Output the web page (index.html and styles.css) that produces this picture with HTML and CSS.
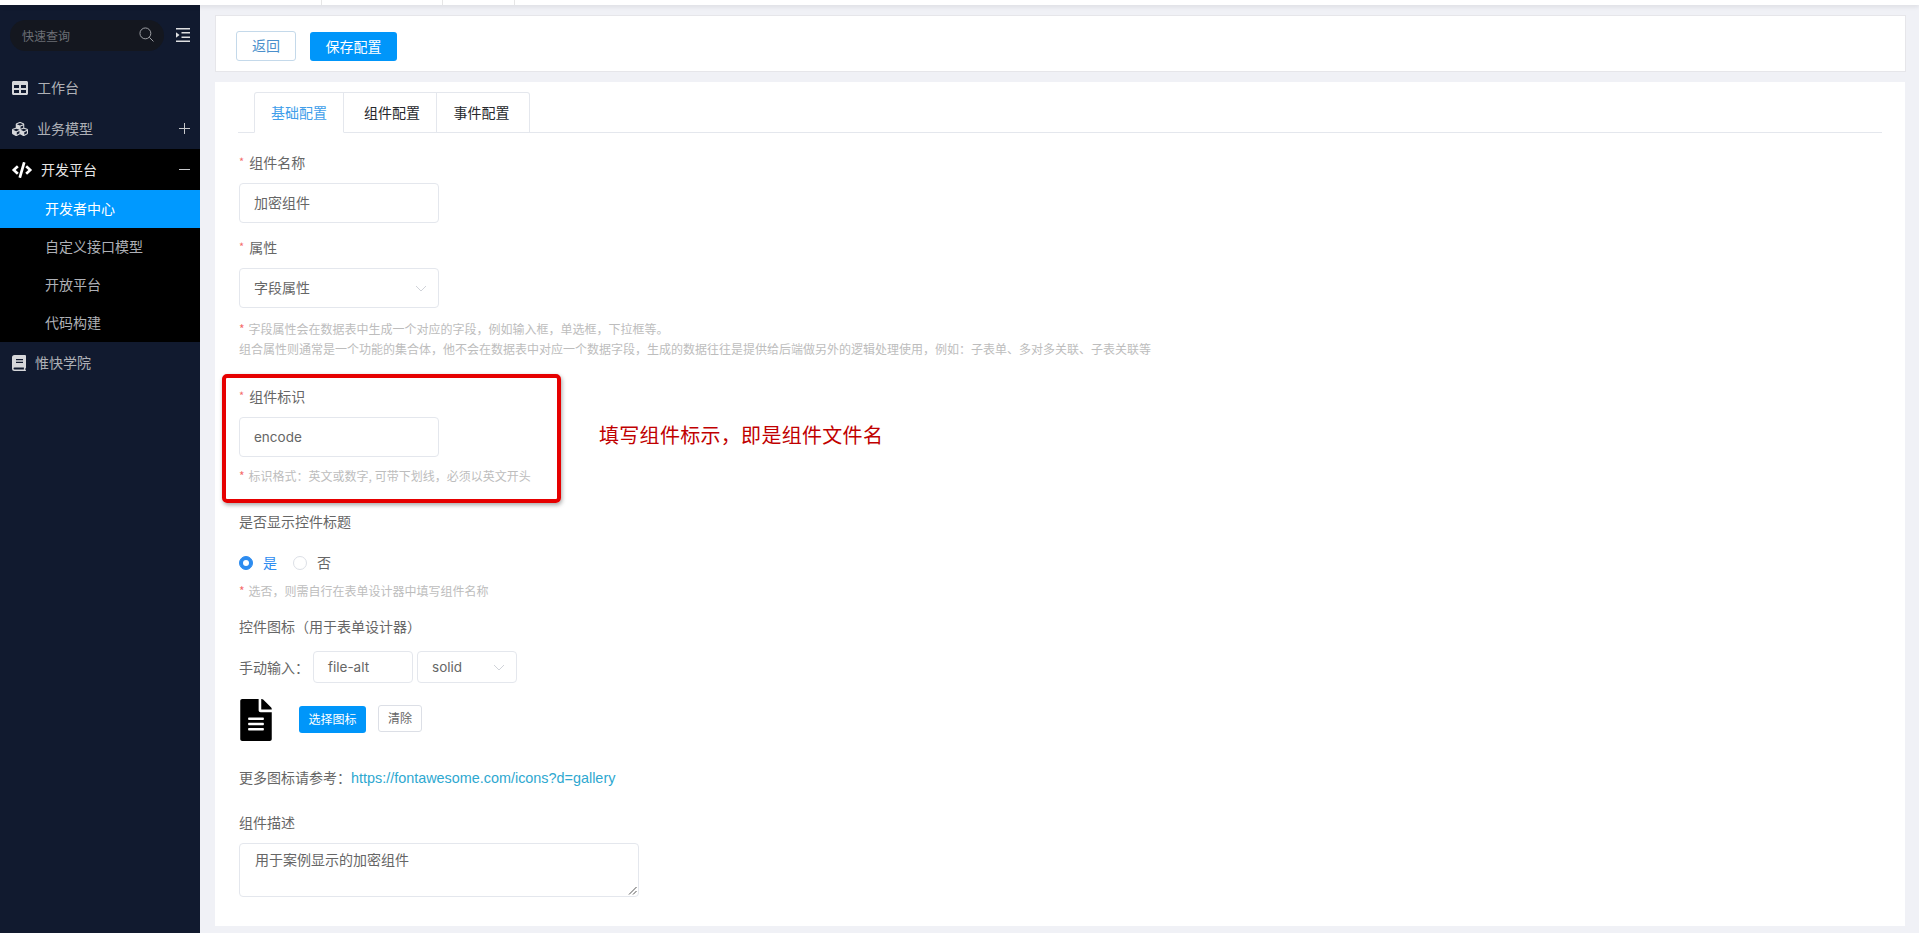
FILE: index.html
```html
<!DOCTYPE html>
<html lang="zh-CN">
<head>
<meta charset="utf-8">
<title>组件配置</title>
<link rel="stylesheet" href="styles.css">
</head>
<body>
<div class="topstrip"><span class="tab-stub s1"></span><span class="tab-stub s2"></span><span class="tab-stub s3"></span></div>
<div class="app">
  <aside class="sidebar">
    <div class="search-row">
      <div class="search"><span>快速查询</span>
        <svg class="search-icon" viewBox="0 0 16 16"><circle cx="6.800" cy="6.800" r="5.800"/><path d="M11 11l4.400 4.400"/></svg>
      </div>
      <svg class="indent" viewBox="0 0 14 14"><path d="M0 0h14v1.600H0zM5.500 4H14v1.600H5.500zM5.500 8.400H14V10H5.500zM0 12.400h14V14H0z"/><path d="M0 4.200L3.500 7 0 9.800z"/></svg>
    </div>
    <nav class="menu">
      <a class="item">
        <svg class="ico" viewBox="0 0 512 512"><path d="M464 32H48C21.490 32 0 53.490 0 80v352c0 26.510 21.490 48 48 48h416c26.510 0 48-21.490 48-48V80c0-26.510-21.490-48-48-48zM224 416H64v-96h160v96zm0-160H64v-96h160v96zm224 160H288v-96h160v96zm0-160H288v-96h160v96z"/></svg>
        <span>工作台</span>
      </a>
      <a class="item">
        <svg class="ico" viewBox="0 0 512 512"><path d="M488.600 250.200L392 214V105.500c0-15-9.300-28.400-23.400-33.700l-100-37.500c-8.100-3.100-17.100-3.100-25.300 0l-100 37.500c-14.100 5.300-23.400 18.700-23.400 33.700V214l-96.600 36.200C9.300 255.500 0 268.900 0 283.900V394c0 13.600 7.700 26.100 19.900 32.200l100 50c10.100 5.100 22.100 5.100 32.200 0l103.900-52 103.900 52c10.100 5.100 22.100 5.100 32.200 0l100-50c12.200-6.100 19.900-18.600 19.900-32.200V283.900c0-15-9.300-28.400-23.400-33.700zM358 214.800l-85 31.900v-68.200l85-37v73.300zM154 104.100l102-38.200 102 38.200v.6l-102 41.400-102-41.400v-.6zm84 291.100l-85 42.500v-79.100l85-38.800v75.400zm0-112l-102 41.400-102-41.400v-.6l102-38.200 102 38.200v.6zm240 112l-85 42.500v-79.100l85-38.800v75.400zm0-112l-102 41.400-102-41.400v-.6l102-38.200 102 38.200v.6z"/></svg>
        <span>业务模型</span><i class="sign plus"></i>
      </a>
      <div class="group">
        <a class="item open">
          <svg class="ico code" viewBox="0 0 640 512"><path d="M278.900 511.500l-61-17.700c-6.400-1.800-10-8.500-8.200-14.900L346.200 8.700c1.800-6.400 8.500-10 14.900-8.200l61 17.700c6.400 1.800 10 8.500 8.200 14.900L293.800 503.300c-1.900 6.400-8.500 10.100-14.900 8.200zm-114-112.200l43.500-46.400c4.600-4.900 4.300-12.700-.8-17.200L117 256l90.600-79.700c5.100-4.500 5.500-12.300.8-17.200l-43.500-46.400c-4.500-4.800-12.100-5.100-17-.5L3.800 247.200c-5.100 4.700-5.100 12.800 0 17.500l144.100 135.100c4.900 4.600 12.500 4.400 17-.5zm327.200.6l144.100-135.100c5.100-4.700 5.100-12.800 0-17.500L492.100 112.100c-4.800-4.500-12.400-4.300-17 .5L431.600 159c-4.600 4.900-4.300 12.700.8 17.200L523 256l-90.600 79.700c-5.100 4.500-5.500 12.300-.8 17.200l43.500 46.400c4.500 4.900 12.100 5.100 17 .6z"/></svg>
          <span>开发平台</span><i class="sign minus"></i>
        </a>
        <a class="sub active">开发者中心</a>
        <a class="sub">自定义接口模型</a>
        <a class="sub">开放平台</a>
        <a class="sub">代码构建</a>
      </div>
      <a class="item last">
        <svg class="ico book" viewBox="0 0 14 16"><path d="M2.500 0H13a1 1 0 0 1 1 1v11.500a1 1 0 0 1-.6.900V15h.1a.5.500 0 0 1 0 1H2.500A2.500 2.500 0 0 1 0 13.500v-11A2.500 2.500 0 0 1 2.500 0zM4 4v1.200h7V4zm0 2.800V8h7V6.800zM2.500 12.500a1 1 0 0 0 0 2h9.400v-2z"/></svg>
        <span>惟快学院</span>
      </a>
    </nav>
  </aside>
  <main class="main">
    <section class="toolbar">
      <button class="btn btn-plain">返回</button>
      <button class="btn btn-primary">保存配置</button>
    </section>
    <section class="panel">
      <div class="tabs">
        <span class="tab current">基础配置</span>
        <span class="tab second">组件配置</span>
        <span class="tab third">事件配置</span>
      </div>

      <label class="label"><em>*</em>组件名称</label>
      <div class="input">加密组件</div>

      <label class="label gap"><em>*</em>属性</label>
      <div class="input select">字段属性<svg class="chev" viewBox="0 0 12 7"><path d="M1 1l5 5 5-5"/></svg></div>

      <p class="help first"><em>*</em>字段属性会在数据表中生成一个对应的字段，例如输入框，单选框，下拉框等。<br>组合属性则通常是一个功能的集合体，他不会在数据表中对应一个数据字段，生成的数据往往是提供给后端做另外的逻辑处理使用，例如：子表单、多对多关联、子表关联等</p>

      <label class="label after-help"><em>*</em>组件标识</label>
      <div class="input latin">encode</div>
      <p class="help tight"><em>*</em>标识格式：英文或数字, 可带下划线，必须以英文开头</p>

      <label class="label after-id">是否显示控件标题</label>
      <div class="radios">
        <span class="radio on"></span><span class="radio-text on">是</span>
        <span class="radio"></span><span class="radio-text">否</span>
      </div>
      <p class="help radio-help"><em>*</em>选否，则需自行在表单设计器中填写组件名称</p>

      <label class="label icon-label">控件图标（用于表单设计器）</label>
      <div class="manual">
        <span class="manual-label">手动输入：</span>
        <div class="input small latin">file-alt</div>
        <div class="input small select latin">solid<svg class="chev" viewBox="0 0 12 7"><path d="M1 1l5 5 5-5"/></svg></div>
      </div>
      <div class="icon-row">
        <svg class="file" viewBox="0 0 384 512"><path d="M224 136V0H24C10.700 0 0 10.700 0 24v464c0 13.300 10.700 24 24 24h336c13.300 0 24-10.700 24-24V160H248c-13.200 0-24-10.800-24-24zm64 236c0 6.600-5.400 12-12 12H108c-6.600 0-12-5.400-12-12v-8c0-6.600 5.400-12 12-12h168c6.600 0 12 5.400 12 12v8zm0-64c0 6.600-5.400 12-12 12H108c-6.600 0-12-5.400-12-12v-8c0-6.600 5.400-12 12-12h168c6.600 0 12 5.400 12 12v8zm0-72v8c0 6.600-5.400 12-12 12H108c-6.600 0-12-5.400-12-12v-8c0-6.600 5.400-12 12-12h168c6.600 0 12 5.400 12 12zm96-114.100v6.100H256V0h6.100c6.400 0 12.500 2.500 17 7l97.900 98c4.500 4.500 7 10.600 7 16.900z"/></svg>
        <button class="btn-sm btn-sm-primary">选择图标</button>
        <button class="btn-sm btn-sm-plain">清除</button>
      </div>
      <div class="more">更多图标请参考：<a class="link">https://fontawesome.com/icons?d=gallery</a></div>

      <label class="label desc-label">组件描述</label>
      <div class="textarea">用于案例显示的加密组件
        <svg class="grip" viewBox="0 0 9 9"><path d="M8.500 1L1 8.500M8.500 5L5 8.500"/></svg>
      </div>

      <div class="redbox"></div>
      <div class="note">填写组件标示，即是组件文件名</div>
    </section>
  </main>
</div>
</body>
</html>
```
FILE: styles.css
```css
* { box-sizing: border-box; }
html, body { margin: 0; height: 933px; overflow: hidden; }
body {
  font-family: "Noto Sans CJK SC", "Noto Sans", sans-serif;
  font-size: 14px;
  color: #666;
  background: #f0f1f6;
}
.topstrip {
  position: relative;
  height: 5px;
  background: #fff;
  box-shadow: 0 2px 4px rgba(0, 0, 0, .08);
  z-index: 2;
}
.tab-stub { position: absolute; top: 0; width: 1px; height: 5px; background: #e6e6e6; }
.s1 { left: 321px; }
.s2 { left: 442px; }
.s3 { left: 514px; }
.app { display: flex; height: 928px; }

.sidebar { width: 200px; flex: none; background: #111a2f; color: #aeb0b6; }
.search-row { display: flex; align-items: center; padding: 15px 0 0 10px; height: 46px; }
.search {
  width: 154px; height: 31px;
  border-radius: 16px;
  background: #14171f;
  color: #6c6f76;
  font-size: 12px;
  line-height: 31px;
  padding-left: 12px;
  position: relative;
}
.search-icon { position: absolute; right: 10px; top: 7px; width: 15px; height: 15px; fill: none; stroke: #a5a7ac; stroke-width: 1; }
.indent { width: 14px; height: 14px; margin-left: 12px; margin-top: -2px; fill: #dfe0e2; }
.menu { display: block; margin-top: 16px; }
.item {
  display: flex; align-items: center;
  height: 41px;
  padding-left: 12px;
  position: relative;
  line-height: 19px;
}
.item .ico { width: 16px; height: 16px; fill: #d6d7da; margin-right: 9px; flex: none; }
.item .code { width: 20px; margin-right: 9px; fill: #fff; }
.item .book { width: 14px; margin-right: 9px; }
.group { background: #000; }
.open { color: #e6e6e6; height: 41px; }
.sign { position: absolute; right: 10px; top: 20px; width: 11px; height: 1px; background: #c8c9cc; }
.plus::after { content: ""; position: absolute; left: 5px; top: -5px; width: 1px; height: 11px; background: #c8c9cc; }
.sub { display: block; height: 38px; line-height: 37px; padding-left: 45px; }
.sub.active { background: #0099ff; color: #fff; }

.main { flex: 1; padding: 10px 13px 7px 15px; display: flex; flex-direction: column; gap: 10px; min-width: 0; }
.toolbar {
  height: 57px; flex: none;
  background: #fff;
  border: 1px solid #e6e6ea;
  padding: 15px 0 0 20px;
  display: flex; gap: 14px; align-items: flex-start;
}
.btn { height: 30px; border-radius: 3px; font: inherit; font-size: 14px; padding: 0 0 2px; }
.btn-plain { width: 60px; background: #fff; border: 1px solid #c4d9ea; color: #4a8fcb; }
.btn-primary { width: 87px; margin-top: 1px; height: 29px; background: #0096fa; border: 0; color: #fff; }

.panel { flex: 1; background: #fff; position: relative; margin-right: 1px; padding: 10px 0 0 24px; display: flex; flex-direction: column; align-items: flex-start; }
.tabs { display: flex; width: 1644px; height: 41px; margin-left: -1px; padding-left: 16px; border-bottom: 1px solid #e4e7ed; flex: none; }
.tab {
  height: 41px;
  border: 1px solid #e4e7ed;
  border-left: 0;
  line-height: 38px;
  color: #26282c;
  width: 93px;
  text-align: center;
  white-space: nowrap;
}
.tab:first-child { border-left: 1px solid #e4e7ed; border-bottom-color: #fff; border-radius: 3px 0 0 0; color: #409eea; width: 90px; }
.tab:last-child { border-radius: 0 3px 0 0; }
.tab.second { padding-left: 4px; }
.tab.third { padding-right: 3px; }

.label { display: block; height: 20px; line-height: 18px; margin-top: 20px; color: #666; }
.label em { color: #f56c6c; font-style: normal; font-size: 11px; margin-right: 5px; position: relative; top: -2px; }
.label.gap { margin-top: 15px; }
.after-help { margin-top: 28px; }
.after-id { margin-top: 26px; }
.icon-label { margin-top: 16px; }
.desc-label { margin-top: 25px; }

.input {
  width: 200px; height: 40px;
  border: 1px solid #e4e7ed;
  border-radius: 4px;
  margin-top: 10px;
  padding-left: 14px;
  line-height: 36px;
  color: #666;
  position: relative;
  background: #fff;
}
.latin { font-family: Inter, "Noto Sans", sans-serif; font-size: 13.5px; line-height: 38px; }
.chev { position: absolute; right: 11px; top: 50%; margin-top: -3px; width: 12px; height: 7px; fill: none; stroke: #d0d3d9; stroke-width: 1; }

.help { margin: 0; font-size: 12px; line-height: 20px; color: #bdbdbd; }
.help em { color: #f56c6c; font-style: normal; margin-right: 4px; }
.help.first { margin-top: 11px; }
.help.tight { margin-top: 9px; }
.help.radio-help { margin-top: 8px; }

.radios { display: flex; align-items: center; height: 20px; margin-top: 21px; line-height: 16px; }
.radio { width: 14px; height: 14px; border-radius: 50%; border: 1px solid #dcdfe6; background: #fff; position: relative; }
.radio.on { background: #2d8cf0; border-color: #2d8cf0; }
.radio.on::after { content: ""; position: absolute; left: 3px; top: 3px; width: 6px; height: 6px; border-radius: 50%; background: #fff; }
.radio-text { margin-left: 10px; margin-right: 16px; color: #666; padding-bottom: 2px; }
.radio-text.on { color: #2d8cf0; }

.manual { display: flex; align-items: center; margin-top: 14px; height: 32px; }
.manual-label { width: 74px; flex: none; }
.input.small { width: 100px; height: 32px; margin: 0 4px 0 0; line-height: 30px; }
.icon-row { display: flex; align-items: flex-start; height: 42px; margin-top: 16px; }
.file { width: 32px; height: 42px; fill: #000; flex: none; margin-left: 1px; }
.btn-sm { height: 27px; border-radius: 3px; font: inherit; font-size: 12px; padding: 0 0 2px; }
.btn-sm-primary { width: 67px; margin: 7px 0 0 27px; background: #0096fa; border: 0; color: #fff; }
.btn-sm-plain { width: 44px; margin: 6px 0 0 12px; background: #fff; border: 1px solid #dcdfe6; color: #666; }
.more { height: 20px; line-height: 18px; margin-top: 27px; }
.link { font-family: "Liberation Sans", sans-serif; color: #2ea8d0; font-size: 14.4px; }
.textarea {
  width: 400px; height: 54px;
  margin-top: 10px;
  border: 1px solid #e4e7ed;
  border-radius: 4px;
  padding: 5px 15px;
  line-height: 20px;
  position: relative;
}
.grip { position: absolute; right: 1px; bottom: 1px; width: 9px; height: 9px; fill: none; stroke: #555; stroke-width: 1; }

.redbox {
  position: absolute; left: 7px; top: 292px;
  width: 339px; height: 129px;
  border: 4px solid #e60000;
  border-radius: 5px;
  box-shadow: 1px 2px 4px rgba(0, 0, 0, .35);
  pointer-events: none;
}
.note { position: absolute; left: 384px; top: 339px; font-size: 20px; letter-spacing: .3px; line-height: 28px; color: #c00000; white-space: nowrap; }
```
